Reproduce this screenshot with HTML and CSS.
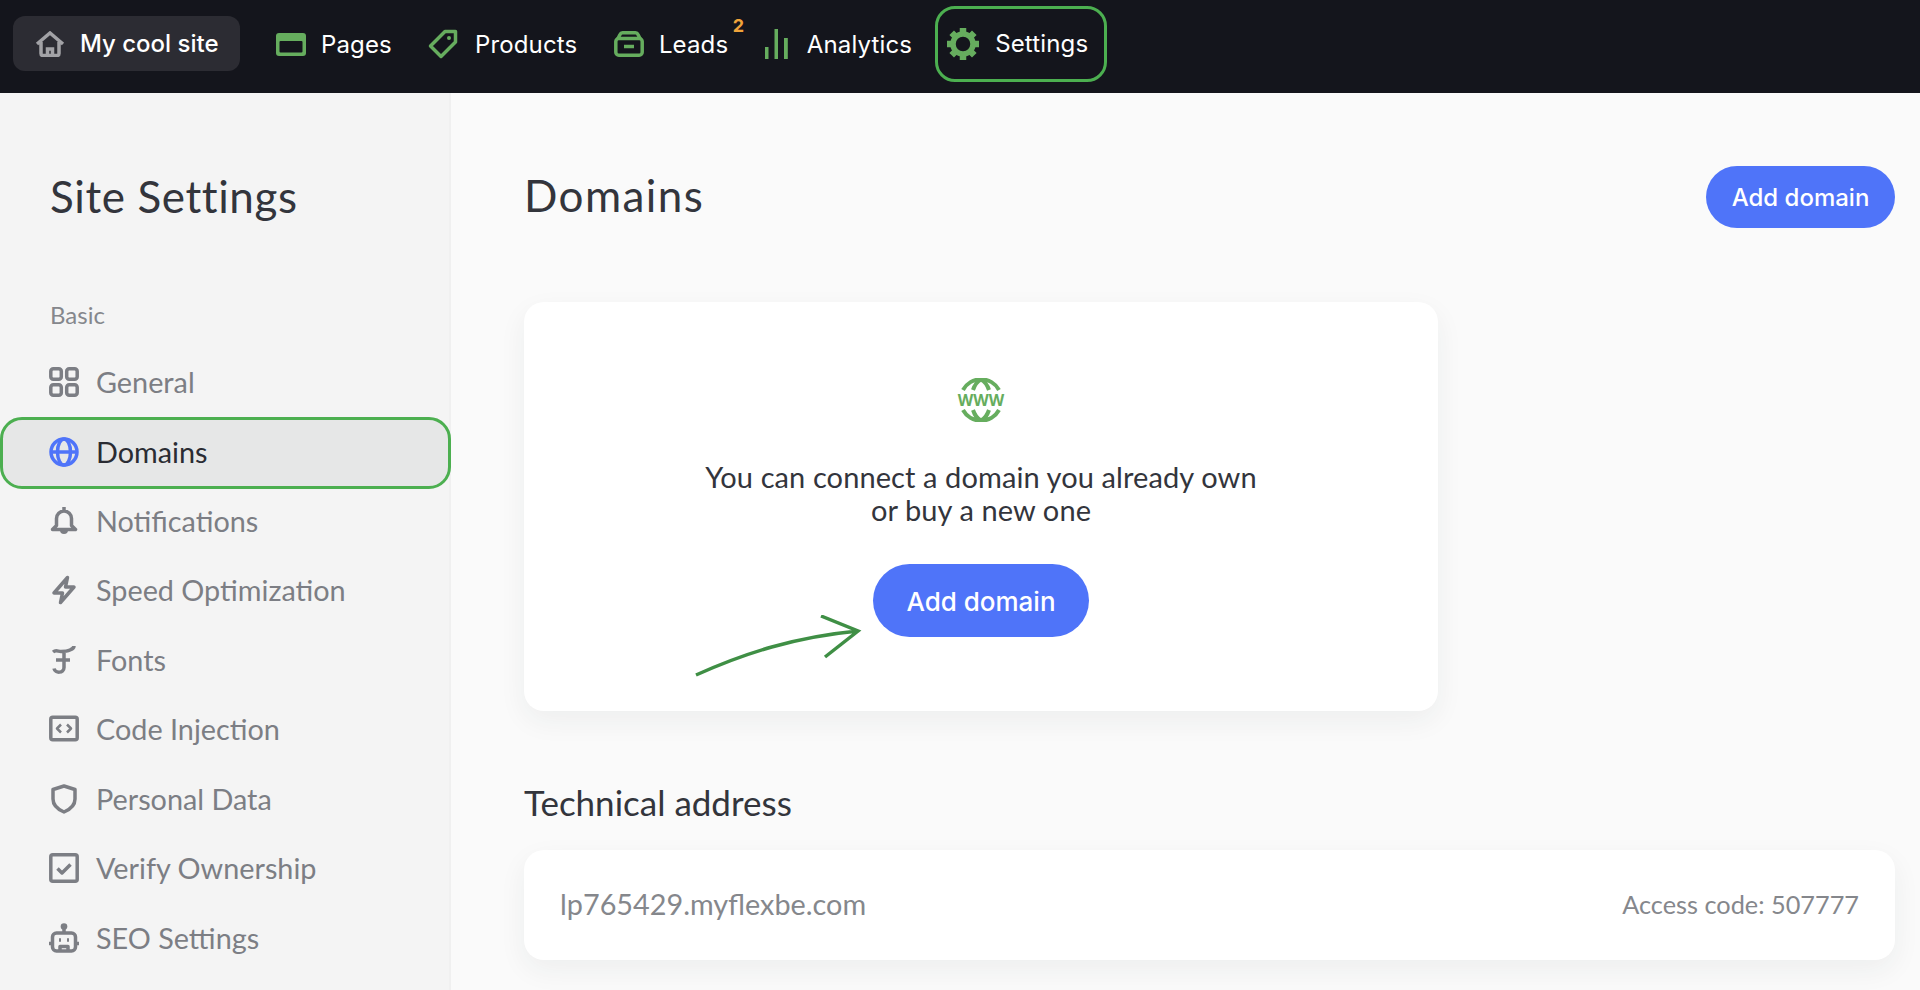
FILE: index.html
```html
<!DOCTYPE html>
<html lang="en">
<head>
    <meta charset="UTF-8">
    <meta name="viewport" content="width=device-width, initial-scale=1.0">
    <title>Site Settings - Domains</title>
    <link rel="stylesheet" href="styles.css">
</head>
<body>

<div class="topbar">
    <div class="site-btn">
        <svg class="icon-home" width="30" height="26" viewBox="0 0 30 26"><path d="M2 13 15 2l13 11M6 11v11.500a2 2 0 0 0 2 2h14a2 2 0 0 0 2-2V11M12.500 24v-6h5v6"/></svg>
        <span>My cool site</span>
    </div>
    <div class="nav-item nav-pages">
        <svg width="30" height="23" viewBox="0 0 30 23"><rect class="fill-green" width="30" height="23" rx="3"/><rect class="fill-dark" x="3.500" y="8" width="23" height="11.500" rx="1"/></svg>
        <span>Pages</span>
    </div>
    <div class="nav-item nav-products">
        <svg class="stroke-green" width="30" height="30" viewBox="0 0 30 30"><path d="M17 2.500h10.500V13L13 27.500 2.500 17z"/><circle class="fill-green" cx="21" cy="9" r="2" stroke="none"/></svg>
        <span>Products</span>
    </div>
    <div class="nav-item nav-leads">
        <svg class="stroke-green" width="30" height="26" viewBox="0 0 30 26"><path d="M4 7.500 6 3.500q.8-1.700 2.500-1.700h13q1.700 0 2.500 1.700l2 4"/><rect x="1.800" y="7.500" width="26.400" height="16.700" rx="3"/><path d="M10 15.500h10"/></svg>
        <span>Leads</span>
        <span class="badge">2</span>
    </div>
    <div class="nav-item nav-analytics">
        <svg width="23" height="30" viewBox="0 0 23 30"><rect class="fill-green" y="18" width="3.500" height="12"/><rect class="fill-green" x="9.500" width="3.500" height="30"/><rect class="fill-green" x="19" y="9" width="3.800" height="21"/></svg>
        <span>Analytics</span>
    </div>
    <div class="nav-item nav-settings">
        <svg width="34" height="34" viewBox="0 0 34 34"><circle class="gear-ring" cx="17" cy="17" r="10"/><path class="gear-teeth" d="M17 1v5M17 28v5M1 17h5M28 17h5M5.700 5.700l3.500 3.500M24.800 24.800l3.500 3.500M28.300 5.700l-3.500 3.500M9.200 24.800l-3.500 3.500"/></svg>
        <span>Settings</span>
    </div>
</div>

<div class="dashboard">
    <div class="sidebar">
        <h2 class="sidebar-title">Site Settings</h2>
        <div class="group-label">Basic</div>
        <ul class="menu">
            <li>
                <svg class="menu-icon" viewBox="0 0 30 30"><rect x="1.800" y="1.800" width="10.500" height="10.500" rx="2.500"/><rect x="17.700" y="1.800" width="10.500" height="10.500" rx="2.500"/><rect x="1.800" y="17.700" width="10.500" height="10.500" rx="2.500"/><rect x="17.700" y="17.700" width="10.500" height="10.500" rx="2.500"/></svg>
                General
            </li>
            <li class="active">
                <svg class="globe-icon" width="30" height="30" viewBox="0 0 30 30"><circle cx="15" cy="15" r="13"/><ellipse cx="15" cy="15" rx="6.500" ry="13"/><path d="M2 15h26"/></svg>
                Domains
            </li>
            <li>
                <svg class="menu-icon" viewBox="0 0 30 30"><path d="M15 5a7.500 7.500 0 0 1 7.500 7.500v7l4 4h-23l4-4v-7A7.500 7.500 0 0 1 15 5zM15 1v4"/><path class="solid" d="M11 24h8a4 4 0 0 1-8 0z"/></svg>
                Notifications
            </li>
            <li>
                <svg class="menu-icon" viewBox="0 0 30 30"><path d="M18.500 2.500 5 18h8.500l-2 9.500L25 12h-8.500z"/></svg>
                Speed Optimization
            </li>
            <li>
                <svg class="menu-icon" viewBox="0 0 30 30"><path d="M4 7c3-2.500 5-.5 8-.5s6 0 9-1.500 4-2 4-4M15 6v16.500c0 6-9 6-10 1M7 15h14"/></svg>
                Fonts
            </li>
            <li>
                <svg class="menu-icon" viewBox="0 0 30 30"><rect x="1.800" y="3.300" width="26.400" height="22.400" rx="2"/><path class="thin" d="M12 10.500l-4 4 4 4M18 10.500l4 4-4 4"/></svg>
                Code Injection
            </li>
            <li>
                <svg class="menu-icon" viewBox="0 0 30 30"><path d="M15 2l11 3.500V15c0 6-5 10.500-11 13C9 25.500 4 21 4 15V5.500z"/></svg>
                Personal Data
            </li>
            <li>
                <svg class="menu-icon" viewBox="0 0 30 30"><rect x="1.800" y="1.800" width="26.400" height="26.400" rx="2"/><path d="M8.500 15.500l4.500 4.500 8.500-8.500"/></svg>
                Verify Ownership
            </li>
            <li>
                <svg class="menu-icon" viewBox="0 0 30 30"><circle class="solid" cx="15" cy="3.500" r="3.300"/><path d="M15 5v5"/><rect x="3.500" y="10" width="23" height="18" rx="4"/><path d="M0 20.500h3.500M26.500 20.500H30M10 17h2M18 17h2M11 27v-3.500h8V27"/></svg>
                SEO Settings
            </li>
        </ul>
    </div>

    <div class="main-content">
        <div class="page-head">
            <h1>Domains</h1>
            <button class="btn btn-small">Add domain</button>
        </div>

        <div class="card empty-card">
            <svg class="www-icon" width="48" height="44" viewBox="0 0 48 44">
                <path d="M6 12A20.500 20.500 0 0 1 42 12M6 32A20.500 20.500 0 0 0 42 32M16 12C18 6 21 3 24 1.500 27 3 30 6 32 12M16 32C18 38 21 41 24 42.500 27 41 30 38 32 32"/>
                <text x="24" y="27.500" text-anchor="middle">WWW</text>
            </svg>
            <p>You can connect a domain you already own<br>or buy a new one</p>
            <button class="btn btn-large">Add domain</button>
            <svg class="hand-arrow" width="175" height="70" viewBox="0 0 175 70"><path d="M1 60C50 38 100 22 163 16M126 1 163 16 130 42"/></svg>
        </div>

        <h3 class="section-title">Technical address</h3>
        <div class="card address-card">
            <span class="address">lp765429.myflexbe.com</span>
            <span class="access-code">Access code: 507777</span>
        </div>
    </div>
</div>

</body>
</html>
```

FILE: styles.css
```css
/* Page frame */
html, body {
    height: 100%;
}

body {
    margin: 0;
    height: 990px;
    overflow: hidden;
    font-family: Lato, "Open Sans", sans-serif;
    background-color: #fafafa;
    color: #33353c;
}

/* Top navigation */
.topbar {
    height: 93px;
    box-sizing: border-box;
    padding-bottom: 5px;
    display: flex;
    align-items: center;
    background-color: #14151c;
    color: #fff;
    font-family: Inter, Roboto, sans-serif;
    font-size: 24px;
}

.site-btn {
    display: flex;
    align-items: center;
    gap: 15px;
    width: 227px;
    height: 55px;
    box-sizing: border-box;
    margin: -1px 0 0 13px;
    padding-left: 22px;
    border-radius: 12px;
    background-color: #2c2c33;
    font-weight: 500;
}

.icon-home path {
    fill: none;
    stroke: #a2a2a6;
    stroke-width: 3.500;
}

.nav-item {
    position: relative;
    display: flex;
    align-items: center;
    gap: 15px;
    letter-spacing: 0.15px;
}

.nav-pages { margin-left: 36px; }
.nav-products { margin-left: 36px; gap: 17px; }
.nav-leads { margin-left: 36.500px; }
.nav-analytics { margin-left: 36.500px; gap: 19px; }

.nav-settings {
    margin: -1px 0 0 23px;
    height: 76px;
    box-sizing: border-box;
    width: 172px;
    padding-left: 8px;
    border: 3px solid #4caf50;
    border-radius: 20px;
}

.fill-green { fill: #66ad5e; }
.fill-dark { fill: #14151c; }

.stroke-green {
    fill: none;
    stroke: #66ad5e;
    stroke-width: 3.500;
    stroke-linejoin: round;
}

.gear-ring {
    fill: none;
    stroke: #66ad5e;
    stroke-width: 5.500;
}

.gear-teeth {
    fill: none;
    stroke: #66ad5e;
    stroke-width: 6.500;
}

.badge {
    position: absolute;
    top: -15px;
    right: -16px;
    color: #f0a33a;
    font-size: 18px;
    font-weight: 700;
}

/* Layout under the top bar */
.dashboard {
    display: flex;
    height: 897px;
}

.sidebar {
    flex: none;
    width: 451px;
    box-sizing: border-box;
    padding-top: 78px;
    background-color: #f4f4f4;
    border-right: 2px solid #f0f0f0;
}

.sidebar-title {
    margin: 0 0 79px 50px;
    font-size: 44px;
    line-height: 50px;
    font-weight: 400;
    letter-spacing: 0.6px;
}

.group-label {
    margin: 0 0 18px 50px;
    font-size: 24px;
    line-height: 30px;
    color: #85878c;
}

.menu {
    list-style-type: none;
    margin: 0;
    padding: 0;
}

.menu li {
    display: flex;
    align-items: center;
    gap: 17px;
    height: 69.500px;
    box-sizing: border-box;
    padding: 0 0 2px 49px;
    font-size: 28.800px;
    color: #7c7e84;
}

.menu li.active {
    height: 72px;
    margin: -0.750px -2px -1.750px 0;
    padding: 0 0 1px 46px;
    border: 3px solid #4caf50;
    border-radius: 22px;
    background-color: #e6e7e7;
    color: #2a2c33;
}

.menu-icon {
    flex: none;
    width: 30px;
    height: 30px;
    fill: none;
    stroke: #7c7e84;
    stroke-width: 3.500;
    stroke-linejoin: round;
}

.menu-icon .solid {
    fill: #7c7e84;
    stroke: none;
}

.menu-icon .thin { stroke-width: 2.500; }

.globe-icon {
    flex: none;
    fill: none;
    stroke: #4f74f9;
    stroke-width: 3.500;
}

/* Main column */
.main-content {
    flex-grow: 1;
    padding: 73px 25px 0 73px;
}

.page-head {
    display: flex;
    justify-content: space-between;
    align-items: center;
    margin-bottom: 74px;
}

h1 {
    margin: -2px 0 2px;
    font-size: 44px;
    font-weight: 400;
    letter-spacing: 1.400px;
}

.btn {
    border: 0;
    background-color: #4f74f9;
    color: #fff;
    font-family: Inter, Roboto, sans-serif;
    font-weight: 500;
}

.btn-small {
    width: 189px;
    height: 62px;
    border-radius: 31px;
    font-size: 24px;
}

.btn-large {
    width: 216px;
    height: 73px;
    padding-top: 2px;
    border-radius: 36.500px;
    font-size: 26px;
}

.card {
    border-radius: 20px;
    background-color: #fff;
    box-shadow: 0 10px 28px rgba(40, 50, 50, 0.06);
}

.empty-card {
    position: relative;
    display: flex;
    flex-direction: column;
    align-items: center;
    width: 914px;
    height: 409px;
    box-sizing: border-box;
    padding-top: 76px;
}

.empty-card p {
    margin: 39px 0 38px;
    font-size: 29px;
    line-height: 32.500px;
    text-align: center;
    letter-spacing: 0.1px;
}

.www-icon path {
    fill: none;
    stroke: #66ad5e;
    stroke-width: 4;
}

.www-icon text {
    fill: #66ad5e;
    font-family: "Open Sans", sans-serif;
    font-size: 16px;
    font-weight: 700;
}

/* Hand drawn pointer over the card */
.hand-arrow {
    position: absolute;
    left: 171px;
    top: 313px;
}

.hand-arrow path {
    fill: none;
    stroke: #3f8f45;
    stroke-width: 3.500;
}

.section-title {
    margin: 71px 0 28px;
    font-size: 35px;
    line-height: 40px;
    font-weight: 400;
}

.address-card {
    display: flex;
    justify-content: space-between;
    align-items: center;
    height: 110px;
    box-sizing: border-box;
    padding: 0 36px 3px;
    color: #85878c;
}

.address { font-size: 28.800px; }
.access-code { font-size: 25.300px; }
```
